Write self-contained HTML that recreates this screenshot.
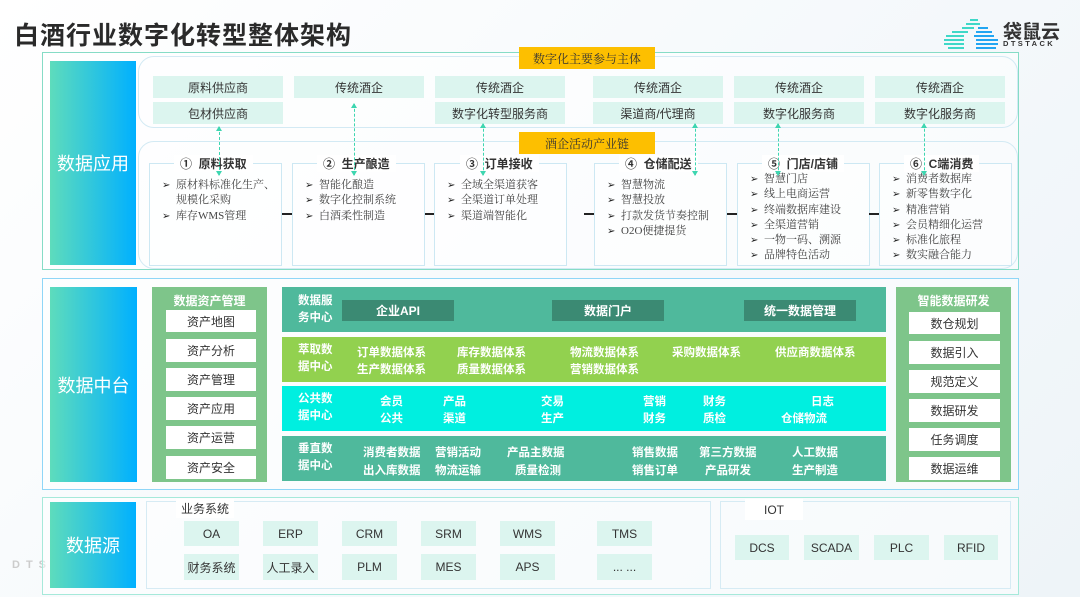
<!DOCTYPE html>
<html><head><meta charset="utf-8"><style>
*{margin:0;padding:0;box-sizing:border-box}
body{width:1080px;height:597px;overflow:hidden;background:linear-gradient(135deg,#fff 0%,#f4f8fb 60%,#eef4f8 100%);font-family:"Liberation Sans","Noto Sans CJK SC",sans-serif;color:#333;position:relative}
.a{position:absolute}
.c{display:flex;align-items:center;justify-content:center;text-align:center}
.lbl{background:linear-gradient(90deg,#5edcbc,#00b0ff);color:#fff;font-size:18px}
.tag{background:#fdbf00;font-size:12px;color:#333;font-family:"Liberation Serif","Noto Serif CJK SC",serif}
.pb{background:#dcf5ef;font-size:12px;color:#333}
.step{border:1px solid #cde8f3;background:rgba(255,255,255,.5)}
.sh{background:#fff;font-size:12px;font-weight:bold;padding:0 6px;white-space:nowrap}
.ul{font-family:"Liberation Serif","Noto Serif CJK SC",serif;font-size:11px;line-height:15.3px;color:#444}
.ul div{padding-left:14px;text-indent:-14px}
.ul div:before{content:"➢";display:inline-block;width:14px;text-indent:0;font-size:10px;color:#222}
.dash{border-left:1.5px dashed #3ed6b0;width:0}
.dash:before,.dash:after{content:"";position:absolute;left:-4px;border-left:3px solid transparent;border-right:3px solid transparent}
.dash:before{top:-1px;border-bottom:5px solid #3ed6b0}
.dash:after{bottom:-1px;border-top:5px solid #3ed6b0}
.line{height:2px;background:#222;width:10px}
.wi{background:#fff;font-size:12px;color:#333}
.row{color:#fff;font-size:11.5px;font-weight:bold}
.row .t{position:absolute;left:16px;line-height:17px}
.s{position:absolute;white-space:nowrap}
.db{background:#3b8a73;color:#fff;font-size:12px;font-weight:bold}
</style></head><body>
<div class="a" style="left:14px;top:16px;font-size:25px;font-weight:bold;color:#2a2a2a;letter-spacing:1px">白酒行业数字化转型整体架构</div>
<!-- logo -->
<svg class="a" style="left:944px;top:18px" width="56" height="32" viewBox="0 0 56 32">
<g fill="#3fd8c8">
<rect x="26" y="1" width="8" height="2"/>
<rect x="22" y="5" width="14" height="2"/>
<rect x="18" y="9" width="12" height="2"/>
<rect x="8" y="13" width="16" height="2"/>
<rect x="2" y="17" width="18" height="2"/>
<rect x="0" y="21" width="20" height="2"/>
<rect x="0" y="25" width="20" height="2"/>
<rect x="4" y="29" width="16" height="2"/>
</g>
<g fill="#22a6f2">
<rect x="34" y="9" width="10" height="2"/>
<rect x="32" y="13" width="16" height="2"/>
<rect x="30" y="17" width="20" height="2"/>
<rect x="32" y="21" width="22" height="2"/>
<rect x="32" y="25" width="22" height="2"/>
<rect x="32" y="29" width="20" height="2"/>
</g></svg>
<div class="a" style="left:1003px;top:17px;font-size:19px;font-weight:bold;color:#333">袋鼠云</div>
<div class="a" style="left:1003px;top:39px;font-size:7.5px;font-weight:bold;letter-spacing:2.4px;color:#333">DTSTACK</div>
<div class="a" style="left:12px;top:559px;font-size:11px;font-weight:bold;letter-spacing:6px;color:#ccc">DTS</div>

<!-- Section 1 -->
<div class="a" style="left:42px;top:52px;width:977px;height:218px;border:1.5px solid #86dcc6;background:rgba(255,255,255,.5)"></div>
<div class="a lbl c" style="left:50px;top:61px;width:86px;height:204px">数据应用</div>
<div class="a" style="left:138px;top:56px;width:880px;height:72px;border:1.5px solid #d3eaf4;border-radius:16px"></div>
<div class="a" style="left:138px;top:141px;width:880px;height:128px;border:1.5px solid #d3eaf4;border-radius:16px"></div>
<div class="a tag c" style="left:519px;top:47px;width:136px;height:22px">数字化主要参与主体</div>
<div class="a tag c" style="left:519px;top:132px;width:136px;height:22px">酒企活动产业链</div>

<div class="a pb c" style="left:153px;top:76px;width:130px;height:22px">原料供应商</div>
<div class="a pb c" style="left:153px;top:102px;width:130px;height:22px">包材供应商</div>
<div class="a pb c" style="left:294px;top:76px;width:130px;height:22px">传统酒企</div>
<div class="a pb c" style="left:435px;top:76px;width:130px;height:22px">传统酒企</div>
<div class="a pb c" style="left:435px;top:102px;width:130px;height:22px">数字化转型服务商</div>
<div class="a pb c" style="left:593px;top:76px;width:130px;height:22px">传统酒企</div>
<div class="a pb c" style="left:593px;top:102px;width:130px;height:22px">渠道商/代理商</div>
<div class="a pb c" style="left:734px;top:76px;width:130px;height:22px">传统酒企</div>
<div class="a pb c" style="left:734px;top:102px;width:130px;height:22px">数字化服务商</div>
<div class="a pb c" style="left:875px;top:76px;width:130px;height:22px">传统酒企</div>
<div class="a pb c" style="left:875px;top:102px;width:130px;height:22px">数字化服务商</div>

<div class="a step" style="left:149px;top:163px;width:133px;height:103px"></div>
<div class="a step" style="left:292px;top:163px;width:133px;height:103px"></div>
<div class="a step" style="left:434px;top:163px;width:133px;height:103px"></div>
<div class="a step" style="left:594px;top:163px;width:133px;height:103px"></div>
<div class="a step" style="left:737px;top:163px;width:133px;height:103px"></div>
<div class="a step" style="left:879px;top:163px;width:133px;height:103px"></div>
<div class="a line" style="left:282px;top:213px"></div>
<div class="a line" style="left:425px;top:213px;width:9px"></div>
<div class="a line" style="left:584px;top:213px"></div>
<div class="a line" style="left:727px;top:213px"></div>
<div class="a line" style="left:869px;top:213px"></div>

<div class="a sh" style="left:174px;top:155px">①&nbsp; 原料获取</div>
<div class="a sh" style="left:317px;top:155px">②&nbsp; 生产酿造</div>
<div class="a sh" style="left:460px;top:155px">③&nbsp; 订单接收</div>
<div class="a sh" style="left:619px;top:155px">④&nbsp; 仓储配送</div>
<div class="a sh" style="left:762px;top:155px">⑤&nbsp; 门店/店铺</div>
<div class="a sh" style="left:904px;top:155px">⑥&nbsp; C端消费</div>

<div class="a ul" style="left:162px;top:178px;width:120px"><div>原材料标准化生产、规模化采购</div><div>库存WMS管理</div></div>
<div class="a ul" style="left:305px;top:178px"><div>智能化酿造</div><div>数字化控制系统</div><div>白酒柔性制造</div></div>
<div class="a ul" style="left:447px;top:178px"><div>全域全渠道获客</div><div>全渠道订单处理</div><div>渠道端智能化</div></div>
<div class="a ul" style="left:607px;top:178px"><div>智慧物流</div><div>智慧投放</div><div>打款发货节奏控制</div><div>O2O便捷提货</div></div>
<div class="a ul" style="left:750px;top:172px"><div>智慧门店</div><div>线上电商运营</div><div>终端数据库建设</div><div>全渠道营销</div><div>一物一码、溯源</div><div>品牌特色活动</div></div>
<div class="a ul" style="left:892px;top:172px"><div>消费者数据库</div><div>新零售数字化</div><div>精准营销</div><div>会员精细化运营</div><div>标准化旅程</div><div>数实融合能力</div></div>

<div class="a dash" style="left:219px;top:127px;height:48px"></div>
<div class="a dash" style="left:354px;top:104px;height:71px"></div>
<div class="a dash" style="left:483px;top:124px;height:51px"></div>
<div class="a dash" style="left:695px;top:124px;height:51px"></div>
<div class="a dash" style="left:778px;top:124px;height:51px"></div>
<div class="a dash" style="left:924px;top:124px;height:51px"></div>

<!-- Section 2 -->
<div class="a" style="left:42px;top:278px;width:977px;height:212px;border:1.5px solid #8fd6f7;background:rgba(255,255,255,.5)"></div>
<div class="a lbl c" style="left:50px;top:287px;width:87px;height:195px">数据中台</div>
<div class="a" style="left:152px;top:287px;width:115px;height:195px;background:#7ec58a"></div>
<div class="a" style="left:152px;top:292px;width:115px;text-align:center;color:#fff;font-size:12px;font-weight:bold">数据资产管理</div>
<div class="a wi c" style="left:166px;top:310px;width:90px;height:22px">资产地图</div>
<div class="a wi c" style="left:166px;top:339px;width:90px;height:23px">资产分析</div>
<div class="a wi c" style="left:166px;top:368px;width:90px;height:23px">资产管理</div>
<div class="a wi c" style="left:166px;top:397px;width:90px;height:23px">资产应用</div>
<div class="a wi c" style="left:166px;top:426px;width:90px;height:23px">资产运营</div>
<div class="a wi c" style="left:166px;top:456px;width:90px;height:23px">资产安全</div>

<div class="a row" style="left:282px;top:287px;width:604px;height:45px;background:#4fb99c"><div class="t" style="top:6px">数据服<br>务中心</div></div>
<div class="a db c" style="left:342px;top:300px;width:112px;height:21px">企业API</div>
<div class="a db c" style="left:552px;top:300px;width:112px;height:21px">数据门户</div>
<div class="a db c" style="left:744px;top:300px;width:112px;height:21px">统一数据管理</div>

<div class="a row" style="left:282px;top:337px;width:604px;height:45px;background:#92d14f"><div class="t" style="top:5px">萃取数<br>据中心</div>
<span class="s" style="left:75px;top:7px">订单数据体系</span><span class="s" style="left:75px;top:24px">生产数据体系</span>
<span class="s" style="left:175px;top:7px">库存数据体系</span><span class="s" style="left:175px;top:24px">质量数据体系</span>
<span class="s" style="left:288px;top:7px">物流数据体系</span><span class="s" style="left:288px;top:24px">营销数据体系</span>
<span class="s" style="left:390px;top:7px">采购数据体系</span><span class="s" style="left:493px;top:7px">供应商数据体系</span></div>

<div class="a row" style="left:282px;top:386px;width:604px;height:45px;background:#00efe0"><div class="t" style="top:5px">公共数<br>据中心</div>
<span class="s" style="left:98px;top:7px">会员</span><span class="s" style="left:98px;top:24px">公共</span>
<span class="s" style="left:161px;top:7px">产品</span><span class="s" style="left:161px;top:24px">渠道</span>
<span class="s" style="left:259px;top:7px">交易</span><span class="s" style="left:259px;top:24px">生产</span>
<span class="s" style="left:361px;top:7px">营销</span><span class="s" style="left:361px;top:24px">财务</span>
<span class="s" style="left:421px;top:7px">财务</span><span class="s" style="left:421px;top:24px">质检</span>
<span class="s" style="left:529px;top:7px">日志</span><span class="s" style="left:499px;top:24px">仓储物流</span></div>

<div class="a row" style="left:282px;top:436px;width:604px;height:45px;background:#4fb99c"><div class="t" style="top:5px">垂直数<br>据中心</div>
<span class="s" style="left:81px;top:8px">消费者数据</span><span class="s" style="left:81px;top:26px">出入库数据</span>
<span class="s" style="left:153px;top:8px">营销活动</span><span class="s" style="left:153px;top:26px">物流运输</span>
<span class="s" style="left:225px;top:8px">产品主数据</span><span class="s" style="left:233px;top:26px">质量检测</span>
<span class="s" style="left:350px;top:8px">销售数据</span><span class="s" style="left:350px;top:26px">销售订单</span>
<span class="s" style="left:417px;top:8px">第三方数据</span><span class="s" style="left:423px;top:26px">产品研发</span>
<span class="s" style="left:510px;top:8px">人工数据</span><span class="s" style="left:510px;top:26px">生产制造</span></div>

<div class="a" style="left:896px;top:287px;width:115px;height:195px;background:#7ec58a"></div>
<div class="a" style="left:896px;top:292px;width:115px;text-align:center;color:#fff;font-size:12px;font-weight:bold">智能数据研发</div>
<div class="a wi c" style="left:909px;top:312px;width:91px;height:22px">数仓规划</div>
<div class="a wi c" style="left:909px;top:341px;width:91px;height:23px">数据引入</div>
<div class="a wi c" style="left:909px;top:370px;width:91px;height:23px">规范定义</div>
<div class="a wi c" style="left:909px;top:399px;width:91px;height:23px">数据研发</div>
<div class="a wi c" style="left:909px;top:428px;width:91px;height:23px">任务调度</div>
<div class="a wi c" style="left:909px;top:457px;width:91px;height:23px">数据运维</div>

<!-- Section 3 -->
<div class="a" style="left:42px;top:497px;width:977px;height:98px;border:1.5px solid #a6e9da;background:rgba(255,255,255,.5)"></div>
<div class="a lbl c" style="left:50px;top:502px;width:86px;height:86px">数据源</div>
<div class="a" style="left:146px;top:501px;width:565px;height:88px;border:1.5px solid #d6ebf4"></div>
<div class="a" style="left:720px;top:501px;width:291px;height:88px;border:1.5px solid #d6ebf4"></div>
<div class="a" style="left:176px;top:499px;width:58px;height:19px;background:#fff;font-size:12px;color:#333;text-align:center;line-height:20px">业务系统</div>
<div class="a c" style="left:745px;top:499px;width:58px;height:21px;background:#fff;font-size:12px;color:#333">IOT</div>

<div class="a pb c" style="left:184px;top:521px;width:55px;height:25px">OA</div>
<div class="a pb c" style="left:263px;top:521px;width:55px;height:25px">ERP</div>
<div class="a pb c" style="left:342px;top:521px;width:55px;height:25px">CRM</div>
<div class="a pb c" style="left:421px;top:521px;width:55px;height:25px">SRM</div>
<div class="a pb c" style="left:500px;top:521px;width:55px;height:25px">WMS</div>
<div class="a pb c" style="left:597px;top:521px;width:55px;height:25px">TMS</div>
<div class="a pb c" style="left:184px;top:554px;width:55px;height:26px">财务系统</div>
<div class="a pb c" style="left:263px;top:554px;width:55px;height:26px">人工录入</div>
<div class="a pb c" style="left:342px;top:554px;width:55px;height:26px">PLM</div>
<div class="a pb c" style="left:421px;top:554px;width:55px;height:26px">MES</div>
<div class="a pb c" style="left:500px;top:554px;width:55px;height:26px">APS</div>
<div class="a pb c" style="left:597px;top:554px;width:55px;height:26px">... ...</div>

<div class="a pb c" style="left:735px;top:535px;width:54px;height:25px">DCS</div>
<div class="a pb c" style="left:804px;top:535px;width:55px;height:25px">SCADA</div>
<div class="a pb c" style="left:874px;top:535px;width:55px;height:25px">PLC</div>
<div class="a pb c" style="left:944px;top:535px;width:54px;height:25px">RFID</div>
</body></html>
